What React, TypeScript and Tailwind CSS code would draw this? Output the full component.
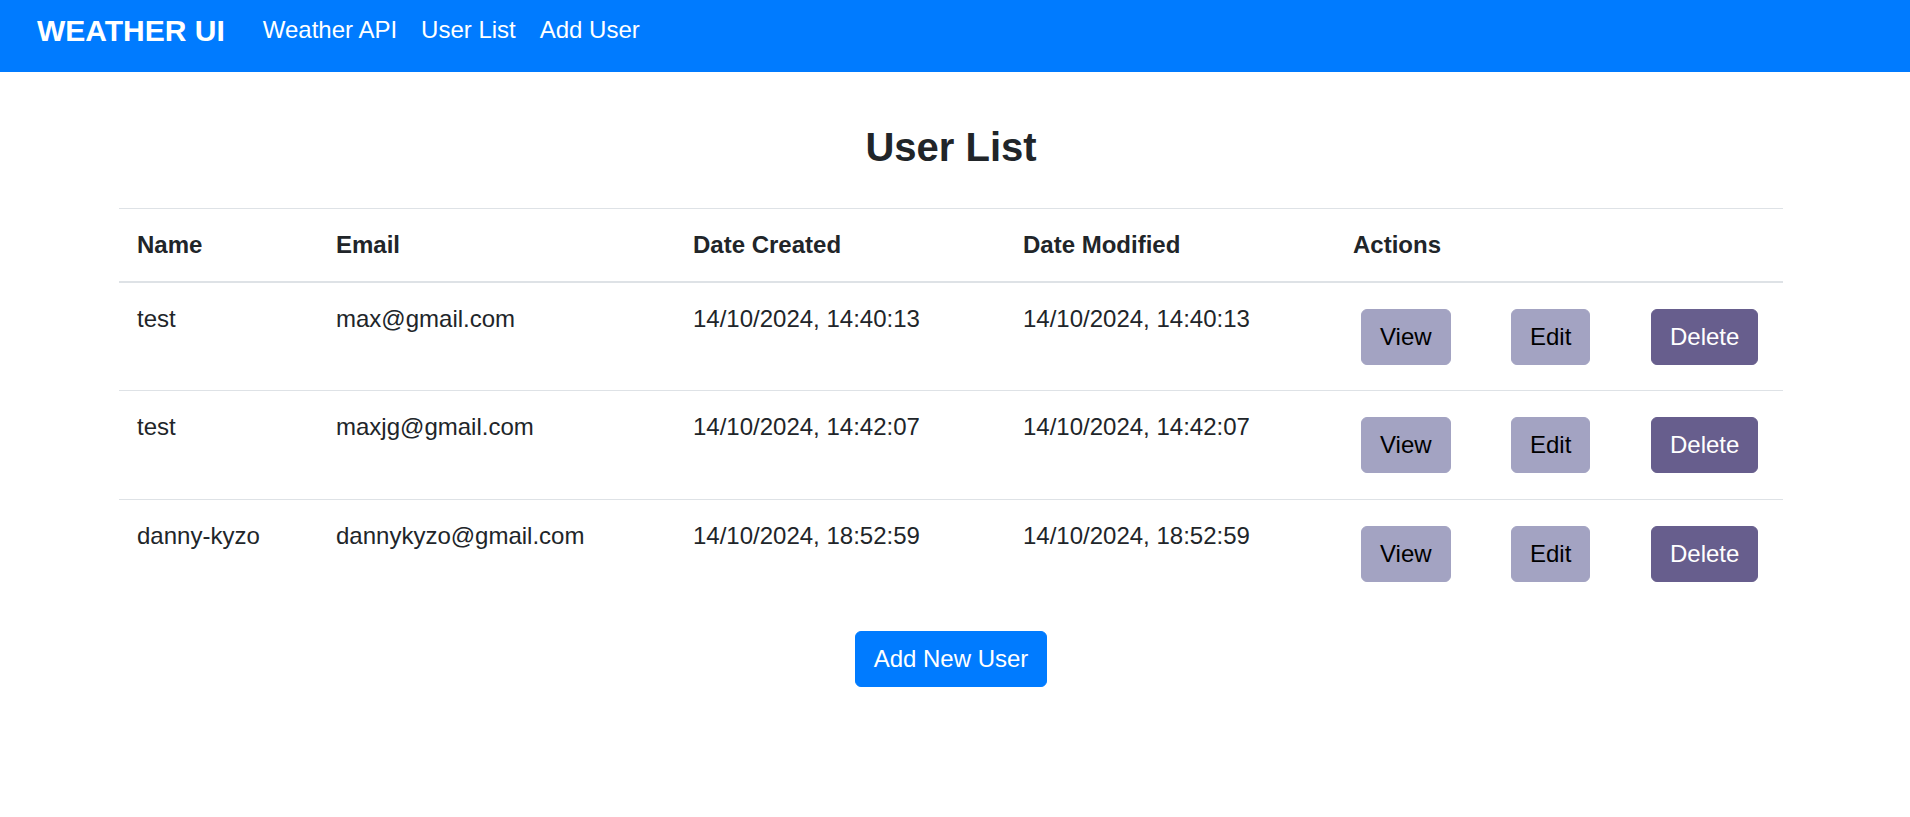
import React from "react";

type User = {
  name: string;
  email: string;
  created: string;
  modified: string;
};

const users: User[] = [
  {
    name: "test",
    email: "max@gmail.com",
    created: "14/10/2024, 14:40:13",
    modified: "14/10/2024, 14:40:13",
  },
  {
    name: "test",
    email: "maxjg@gmail.com",
    created: "14/10/2024, 14:42:07",
    modified: "14/10/2024, 14:42:07",
  },
  {
    name: "danny-kyzo",
    email: "dannykyzo@gmail.com",
    created: "14/10/2024, 18:52:59",
    modified: "14/10/2024, 18:52:59",
  },
];

const Navbar = () => (
  <nav className="h-[72px] w-full bg-[#007bff] pl-[37px]">
    <div className="flex h-[60px] items-center text-white">
      <a href="#" className="mr-[26px] text-[30px] font-bold leading-[45px]">
        WEATHER UI
      </a>
      <a href="#" className="px-[12px] text-[24px] leading-[36px]">
        Weather API
      </a>
      <a href="#" className="px-[12px] text-[24px] leading-[36px]">
        User List
      </a>
      <a href="#" className="px-[12px] text-[24px] leading-[36px]">
        Add User
      </a>
    </div>
  </nav>
);

const UserRow = ({ user, first }: { user: User; first: boolean }) => {
  const cell = `px-[18px] align-top ${
    first ? "pt-[18px] pb-[17px]" : "py-[18px] border-t border-[#dee2e6]"
  }`;
  return (
    <tr>
      <td className={cell}>{user.name}</td>
      <td className={cell}>{user.email}</td>
      <td className={cell}>{user.created}</td>
      <td className={cell}>{user.modified}</td>
      <td className={cell}>
        <button className="m-[8px] rounded-[6px] border border-[#a3a3c2] bg-[#a3a3c2] px-[18px] py-[9px] text-black">
          View
        </button>
      </td>
      <td className={cell}>
        <button className="m-[8px] rounded-[6px] border border-[#a3a3c2] bg-[#a3a3c2] px-[18px] py-[9px] text-black">
          Edit
        </button>
      </td>
      <td className={cell}>
        <button className="m-[8px] rounded-[6px] border border-[#675e8d] bg-[#675e8d] px-[18px] py-[9px] text-white">
          Delete
        </button>
      </td>
    </tr>
  );
};

export default function App() {
  const th =
    "border-t border-b-2 border-[#dee2e6] px-[18px] py-[18px] text-left font-bold";

  return (
    <div className="min-h-screen bg-white font-['Liberation_Sans',Arial,sans-serif] text-[#212529]">
      <Navbar />

      <main className="ml-[119px] w-[1664px] pt-[51px]">
        <h2 className="mb-[37px] text-center text-[40px] font-bold leading-[48px]">
          User List
        </h2>

        <table className="w-full table-fixed border-separate border-spacing-0 text-[24px] leading-[36px]">
          <colgroup>
            <col className="w-[199px]" />
            <col className="w-[357px]" />
            <col className="w-[330px]" />
            <col className="w-[330px]" />
            <col className="w-[150px]" />
            <col className="w-[140px]" />
            <col className="w-[158px]" />
          </colgroup>
          <thead>
            <tr>
              <th className={th}>Name</th>
              <th className={th}>Email</th>
              <th className={th}>Date Created</th>
              <th className={th}>Date Modified</th>
              <th className={th} colSpan={3}>
                Actions
              </th>
            </tr>
          </thead>
          <tbody>
            {users.map((u, i) => (
              <UserRow key={u.email} user={u} first={i === 0} />
            ))}
          </tbody>
        </table>

        <div className="mt-[23px] flex justify-center">
          <button className="rounded-[6px] border border-[#007bff] bg-[#007bff] px-[18px] py-[9px] text-[24px] leading-[36px] text-white">
            Add New User
          </button>
        </div>
      </main>
    </div>
  );
}
